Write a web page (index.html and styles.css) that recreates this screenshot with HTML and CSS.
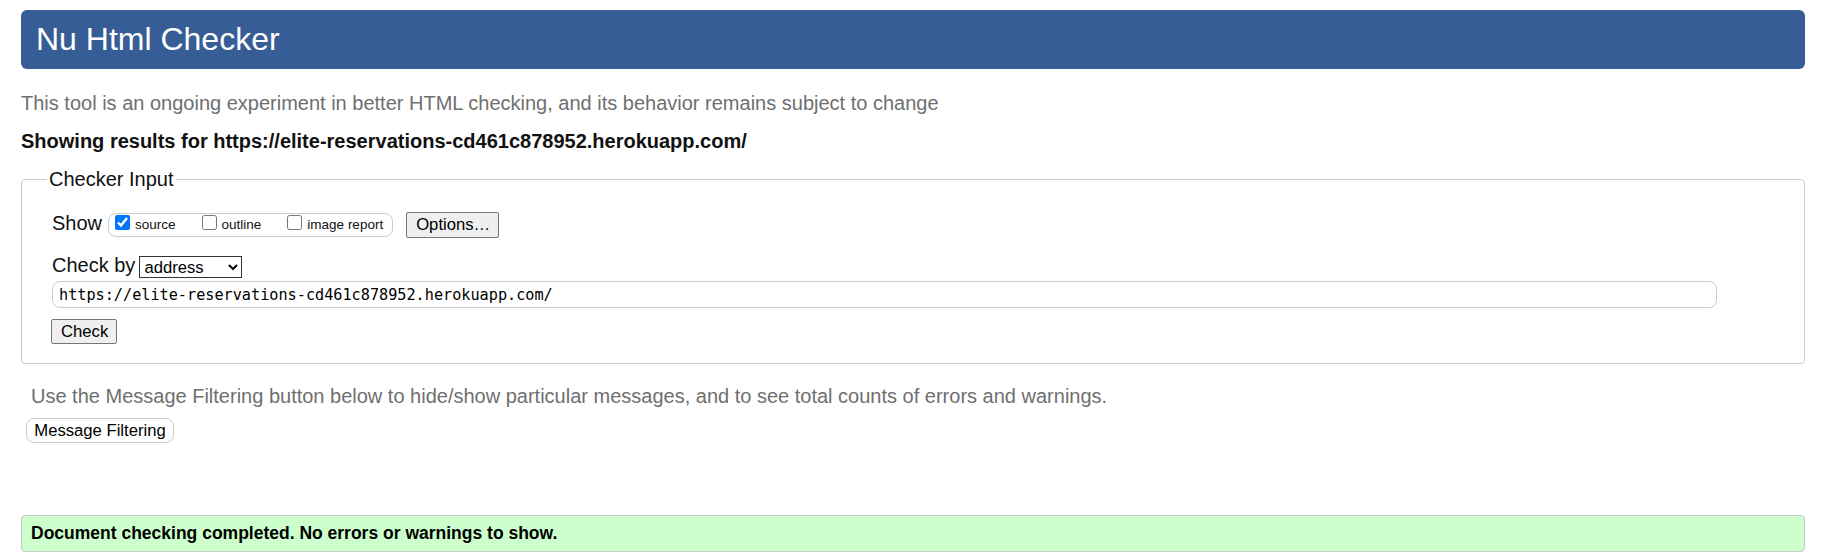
FILE: index.html
```html
<!DOCTYPE html>
<html lang="en">
<head>
<meta charset="utf-8">
<title>Nu Html Checker</title>
<link rel="stylesheet" href="styles.css">
</head>
<body>
<h1 class="title">Nu Html Checker</h1>
<p class="intro">This tool is an ongoing experiment in better HTML checking, and its behavior remains subject to change</p>
<p class="showing">Showing results for https://elite-reservations-cd461c878952.herokuapp.com/</p>
<form class="checker">
  <fieldset class="input-box">
    <legend class="legend">Checker Input</legend>
    <div class="row row-show">
      <span class="lbl">Show</span>
      <span class="group">
        <label class="opt"><input type="checkbox" class="cb" checked><span>source</span></label>
        <label class="opt"><input type="checkbox" class="cb"><span>outline</span></label>
        <label class="opt"><input type="checkbox" class="cb"><span>image report</span></label>
      </span>
      <button type="button" class="btn btn-options">Options…</button>
    </div>
    <div class="row row-by">
      <span class="lbl">Check by</span>
      <select class="sel"><option>address</option></select>
    </div>
    <div class="row row-url">
      <input type="text" class="url" value="https://elite-reservations-cd461c878952.herokuapp.com/">
    </div>
    <div class="row row-check">
      <button type="button" class="btn btn-check">Check</button>
    </div>
  </fieldset>
</form>
<p class="filter-note">Use the Message Filtering button below to hide/show particular messages, and to see total counts of errors and warnings.</p>
<button type="button" class="filter-btn">Message Filtering</button>
<div class="success">Document checking completed. No errors or warnings to show.</div>
</body>
</html>
```
FILE: styles.css
```css
html, body {
  background: #fff;
}
body {
  margin: 0;
  padding: 10px 21px 0;
  font-family: "Liberation Sans", Arial, sans-serif;
  font-size: 20px;
  color: #111;
}
.title {
  margin: 0;
  height: 59px;
  padding: 0 15px;
  background: #365d95;
  color: #fff;
  border-radius: 6px;
  font-size: 32px;
  font-weight: normal;
  line-height: 59px;
}
.intro {
  margin: 22px 0 0 0;
  line-height: 24px;
  color: #6f6f6f;
}
.showing {
  margin: 14px 0 0 0;
  line-height: 24px;
  font-weight: bold;
  color: #111;
}
.checker {
  margin: 15px 0 0;
}
.input-box {
  margin: 0;
  padding: 21px 30px 19px;
  border: 1px solid #ccc;
  border-radius: 4px;
  min-width: 0;
}
.legend {
  margin-left: -5px;
  padding: 0 2px;
  font-size: 20px;
  line-height: 23px;
  color: #111;
}
.row {
  display: flex;
  align-items: center;
}
.row-show {
  height: 26px;
  margin-bottom: 18px;
}
.row-by {
  height: 22px;
  margin-bottom: 3px;
}
.row-url {
  height: 27px;
  margin-bottom: 11px;
}
.row-check {
  height: 25px;
}
.lbl {
  line-height: 23px;
  margin-top: -3px;
}
.group {
  display: flex;
  align-items: center;
  height: 22px;
  margin-left: 6px;
  padding: 0 9px 0 6px;
  border: 1px solid #ccc;
  border-radius: 8px;
  font-size: 13.5px;
}
.opt {
  display: flex;
  align-items: center;
}
.opt + .opt {
  margin-left: 26px;
}
.cb {
  width: 15px;
  height: 15px;
  margin: 0 5px 5px 0;
}
.opt span {
  line-height: 16px;
}
.btn {
  font-family: "Liberation Sans", Arial, sans-serif;
  font-size: 16.67px;
  color: #000;
  background: #efefef;
  border: 1px solid #767676;
  border-radius: 2px;
  padding: 0 9px;
}
.btn-options {
  height: 26px;
  width: 93px;
  margin-left: 13px;
}
.btn-check {
  height: 25px;
  width: 66px;
  margin-left: -1px;
}
.sel {
  height: 22px;
  width: 103px;
  margin-left: 4px;
  font-family: "Liberation Sans", Arial, sans-serif;
  font-size: 16.67px;
  color: #000;
  background: #fff;
  border: 1px solid #333;
  border-radius: 0;
}
.url {
  box-sizing: border-box;
  width: 1665px;
  height: 27px;
  padding: 0 6px;
  border: 1px solid #ccc;
  border-radius: 8px;
  font-family: "DejaVu Sans Mono", "Liberation Mono", monospace;
  font-size: 15.2px;
  color: #000;
  outline: none;
}
.filter-note {
  margin: 20px 0 0 10px;
  line-height: 24px;
  color: #6f6f6f;
}
.filter-btn {
  display: block;
  margin: 10px 0 0 5px;
  height: 25px;
  width: 148px;
  padding: 0;
  background: #fff;
  border: 1px solid #ccc;
  border-radius: 8px;
  font-family: "Liberation Sans", Arial, sans-serif;
  font-size: 16.67px;
  color: #000;
}
.success {
  margin-top: 72px;
  box-sizing: border-box;
  height: 37px;
  padding: 7px 9px 0;
  background: #ccffcc;
  border: 1px solid #c8c8c8;
  border-radius: 4px;
  font-size: 17.5px;
  font-weight: bold;
  line-height: 20px;
  color: #000;
}
```
